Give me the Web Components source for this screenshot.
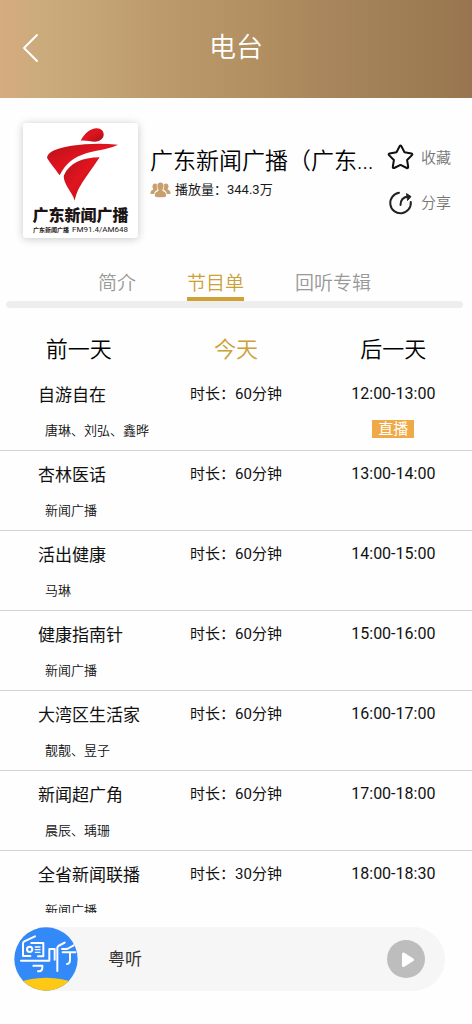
<!DOCTYPE html>
<html lang="zh-CN">
<head>
<meta charset="utf-8">
<meta name="viewport" content="width=device-width, initial-scale=1">
<title>电台</title>
<style>
  html, body { margin: 0; height: 100%; }
  body {
    background: #fefefe;
    color: #111;
    font-family: Roboto, "Noto Sans CJK SC", sans-serif;
    font-size: 15px;
  }
</style>
</head>
<body>
<radio-page></radio-page>

<script>
const define = (name, html, setup) => {
  const template = document.createElement('template');
  template.innerHTML = `<style>
    * { box-sizing: border-box; }
    button { border: 0; padding: 0; margin: 0; background: none; color: inherit; font: inherit; cursor: pointer; }
    svg { display: block; }
  </style>` + html;
  customElements.define(name, class extends HTMLElement {
    connectedCallback() {
      if (this.shadowRoot) return;
      this.attachShadow({ mode: 'open' }).append(template.content.cloneNode(true));
      if (setup) setup(this, this.shadowRoot);
    }
  });
};

define('app-header', `
  <style>
    :host {
      display: grid; grid-template-columns: 60px 1fr 60px; align-items: center;
      height: 98px; flex: none; padding-bottom: 2px; color: #fff;
      background: linear-gradient(90deg, #d5ab80 0%, #cbab7b 9%, #bc9a6c 34%, #b08e60 57%, #a9865d 68%, #9f7d54 87%, #98754e 100%);
    }
    button { height: 48px; padding-left: 21px; }
    h1 { margin: 0; font-size: 27px; line-height: 40px; font-weight: 350; text-align: center; }
  </style>
  <button aria-label="返回">
    <svg width="20" height="30" viewBox="0 0 20 30" fill="none" stroke="#fff" stroke-width="2" stroke-linecap="round" stroke-linejoin="round"><path d="M16 2 3 15l13 13"/></svg>
  </button>
  <h1><slot></slot></h1>`);

define('station-cover', `
  <style>
    :host {
      display: flex; flex-direction: column; align-items: center; flex: none;
      width: 115px; height: 115px; border-radius: 3px; background: #fff; color: #1c1414;
      box-shadow: 0 1px 8px rgba(0,0,0,.22);
    }
    svg { width: 115px; height: 82px; }
    .name { font-size: 16px; line-height: 21px; font-weight: 900; }
    .freq { display: flex; gap: 3px; font-size: 8px; line-height: 8px; white-space: nowrap; align-items: center; }
    .freq b { font-size: 6px; }
  </style>
  <svg viewBox="0 0 345 246" aria-hidden="true">
    <defs><linearGradient id="r" x1="0" y1="0" x2="1" y2="1">
      <stop offset="0" stop-color="#b5121b"/><stop offset=".45" stop-color="#e1141f"/><stop offset="1" stop-color="#a80f18"/>
    </linearGradient></defs>
    <g fill="url(#r)">
      <path d="M173 53C184 32 203 16 221 16c14 0 22 10 21 20-1 12-12 20-27 20-14 0-25-5-42-3z"/>
      <path d="M72 104C74 85 104 75 145 68c45-7 95-8 140-3-27 14-60 15-93 25-40 12-65 32-82 67C98 139 80 119 72 104z"/>
      <path d="M230 103c-52 0-92 18-107 54-3 9 4 24 12 38 10 17 16 24 20 38 6-26 12-38 28-62 17-26 31-43 47-68z"/>
    </g>
  </svg>
  <span class="name">广东新闻广播</span>
  <span class="freq"><b>广东新闻广播</b><span>FM91.4/AM648</span></span>`);

define('action-button', `
  <style>
    :host { display: block; }
    button { display: flex; align-items: center; gap: 7px; font-size: 15px; line-height: 24px; font-weight: 350; color: #777; white-space: nowrap; }
  </style>
  <button><slot name="icon"></slot><slot></slot></button>`);

define('station-info', `
  <style>
    :host { display: flex; flex: none; padding: 25px 21px 0 23px; height: 167px; }
    .text { flex: 1; min-width: 0; padding: 24px 0 0 12px; }
    h2 { margin: 0; font-size: 23px; line-height: 30px; font-weight: 350; color: #000; white-space: nowrap; overflow: hidden; }
    p { display: flex; align-items: center; gap: 4px; margin: 0; font-size: 13px; line-height: 26px; color: #1a1a1a; }
    .actions { display: flex; flex-direction: column; gap: 20px; padding-top: 21px; margin-left: 14px; }
  </style>
  <station-cover></station-cover>
  <div class="text">
    <h2>广东新闻广播（广东...</h2>
    <p>
      <svg width="21" height="16" viewBox="0 0 21 16" fill="#c9a06d" aria-hidden="true">
        <path d="M5 1.600a2.600 2.600 0 0 1 2 1c-.6 2 .1 4 .6 5.200C5.500 8.700 4.500 10 4.200 12H.5c-.4-3 1-4 3-4.600C2 5.600 2 1.800 5 1.600zM16 1.600a2.600 2.600 0 0 0-2 1c.6 2-.1 4-.6 5.200 2.100.9 3.100 2.200 3.400 4.200h3.700c.4-3-1-4-3-4.600 1.500-1.800 1.500-5.600-1.500-5.800z"/>
        <path d="M10.500.4c3.600 0 3.900 4.600 1.900 7.400-.2 1 .3 1.200 1.300 1.600 2.100.8 2.600 2.400 2.400 5-3.600 1.200-7.600 1.200-11.200 0-.2-2.600.3-4.200 2.400-5 1-.4 1.500-.6 1.300-1.600C6.600 5 6.900.4 10.500.4z"/>
      </svg>
      <span>播放量：344.3万</span>
    </p>
  </div>
  <div class="actions">
    <action-button>
      <svg slot="icon" width="27" height="27" viewBox="0 0 27 27" fill="none" stroke="#111" stroke-width="2" stroke-linejoin="round" aria-hidden="true"><path d="M12.600 2.200q.9-1.400 1.800 0l3.100 6.100 6.900 1.100q1.500.5.6 1.700l-4.900 4.900 1.100 7q0 1.500-1.400 1L13.500 20.900 7.200 24q-1.500.4-1.400-1l1.100-7L2 11.100q-.9-1.200.6-1.700l6.900-1.100z"/></svg>收藏
    </action-button>
    <action-button>
      <svg slot="icon" width="27" height="24" viewBox="0 0 27 24" fill="none" stroke="#222" stroke-width="2" stroke-linecap="round" aria-hidden="true"><path d="M12 1.800A10.300 10.300 0 1 0 23.800 11M13.500 14c0-5 2-8 8-8.500"/><path d="M19.800 2.800 24 5.600l-3.200 3.600z" fill="#222" stroke-width="1" stroke-linejoin="round"/></svg>分享
    </action-button>
  </div>`);

define('section-tabs', `
  <style>
    :host { display: block; flex: none; padding: 0 9px 0 6px; }
    nav { display: flex; justify-content: center; gap: 51px; height: 36px; }
    button { height: 36px; padding-top: 5px; font-size: 19px; line-height: 27px; font-weight: 350; color: #999; border-bottom: 4px solid transparent; white-space: nowrap; }
    button[aria-selected="true"] { color: #cca038; border-color: #cfa136; }
    .bar { height: 7px; border-radius: 4px; background: #eee; }
  </style>
  <nav role="tablist">
    <button role="tab" aria-selected="false">简介</button>
    <button role="tab" aria-selected="true">节目单</button>
    <button role="tab" aria-selected="false">回听专辑</button>
  </nav>
  <div class="bar"></div>`);

define('day-picker', `
  <style>
    :host { display: grid; grid-template-columns: repeat(3, 1fr); flex: none; padding: 26px 0 5px; }
    button { font-size: 22px; line-height: 32px; font-weight: 350; color: #000; }
    button[aria-pressed="true"] { color: #cca038; }
  </style>
  <button aria-pressed="false">前一天</button>
  <button aria-pressed="true">今天</button>
  <button aria-pressed="false">后一天</button>`);

const programs = [
  ['自游自在', '唐琳、刘弘、鑫晔', 60, '12:00-13:00', true],
  ['杏林医话', '新闻广播', 60, '13:00-14:00'],
  ['活出健康', '马琳', 60, '14:00-15:00'],
  ['健康指南针', '新闻广播', 60, '15:00-16:00'],
  ['大湾区生活家', '靓靓、昱子', 60, '16:00-17:00'],
  ['新闻超广角', '晨辰、瑀珊', 60, '17:00-18:00'],
  ['全省新闻联播', '新闻广播', 30, '18:00-18:30']
];

define('program-list', `
  <style>
    :host { display: block; flex: 1; min-height: 0; overflow-y: auto; scrollbar-width: none; }
    table { width: 100%; table-layout: fixed; border-collapse: separate; border-spacing: 0; }
    td { height: 80px; padding: 11px 0 0; vertical-align: top; text-align: center; white-space: nowrap; line-height: 24px; border-bottom: 1px solid #d4d4d4; }
    td:first-child { text-align: left; padding-left: 38px; }
    .name { font-size: 17px; line-height: 26px; }
    .hosts { margin: 13px 0 0 7px; font-size: 13px; line-height: 20px; font-weight: 350; }
    .time { font-size: 16px; }
    .live { display: block; width: 42px; margin: 14px auto 0; background: #f0a947; color: #fff; font-size: 15px; line-height: 18px; }
  </style>
  <table aria-label="节目单"><tbody></tbody></table>`,
  (host, root) => {
    root.querySelector('tbody').innerHTML = programs.map(([name, hosts, minutes, time, live]) => `
      <tr>
        <td><div class="name">${name}</div><div class="hosts">${hosts}</div></td>
        <td>时长：${minutes}分钟</td>
        <td class="time">${time}${live ? '<span class="live">直播</span>' : ''}</td>
      </tr>`).join('');
  });

define('mini-player', `
  <style>
    :host {
      display: flex; align-items: center; flex: none; height: 64px;
      margin: 14px 27px 33px 14px; padding-right: 20px; border-radius: 32px; background: #f6f6f6;
    }
    .title { flex: 1; padding-left: 30px; font-size: 17px; line-height: 24px; color: #333; }
  </style>
  <svg width="64" height="64" viewBox="0 0 192 192" aria-hidden="true">
    <defs><clipPath id="c"><circle cx="96" cy="96" r="95"/></clipPath></defs>
    <g clip-path="url(#c)">
      <path fill="#3489f8" d="M0 0h192v192H0z"/>
      <ellipse cx="96" cy="212" rx="125" ry="60" fill="#fdc914"/>
    </g>
    <g fill="none" stroke="#fff" stroke-width="6" stroke-linecap="round" stroke-linejoin="round">
      <path d="M63 28 31 43q-4 2-4 7v37h22M52 48h36v40H72M21 101h85V66h16v32M58 116h27v6q0 11-13 11"/>
      <circle cx="47" cy="67" r="8"/>
      <path stroke-width="4" d="M64 60h14M64 68h14M64 76h14"/>
      <path d="m152 47-19 10q-3 2-3 6v69M179 55l-14 8q-4 3-9 3h-12M146 76h38M168 76v22q0 12-9 13"/>
    </g>
  </svg>
  <span class="title"><slot></slot></span>
  <button aria-label="播放">
    <svg width="38" height="38" viewBox="0 0 38 38"><circle cx="19" cy="19" r="19" fill="#bdbdbd"/><path d="M16.500 14v11.500L25.500 19.800z" fill="#fff" stroke="#fff" stroke-width="3" stroke-linejoin="round"/></svg>
  </button>`);

define('radio-page', `
  <style>:host { display: flex; flex-direction: column; height: 100vh; overflow: hidden; }</style>
  <app-header>电台</app-header>
  <station-info></station-info>
  <section-tabs></section-tabs>
  <day-picker></day-picker>
  <program-list></program-list>
  <mini-player>粤听</mini-player>`);
</script>
</body>
</html>
